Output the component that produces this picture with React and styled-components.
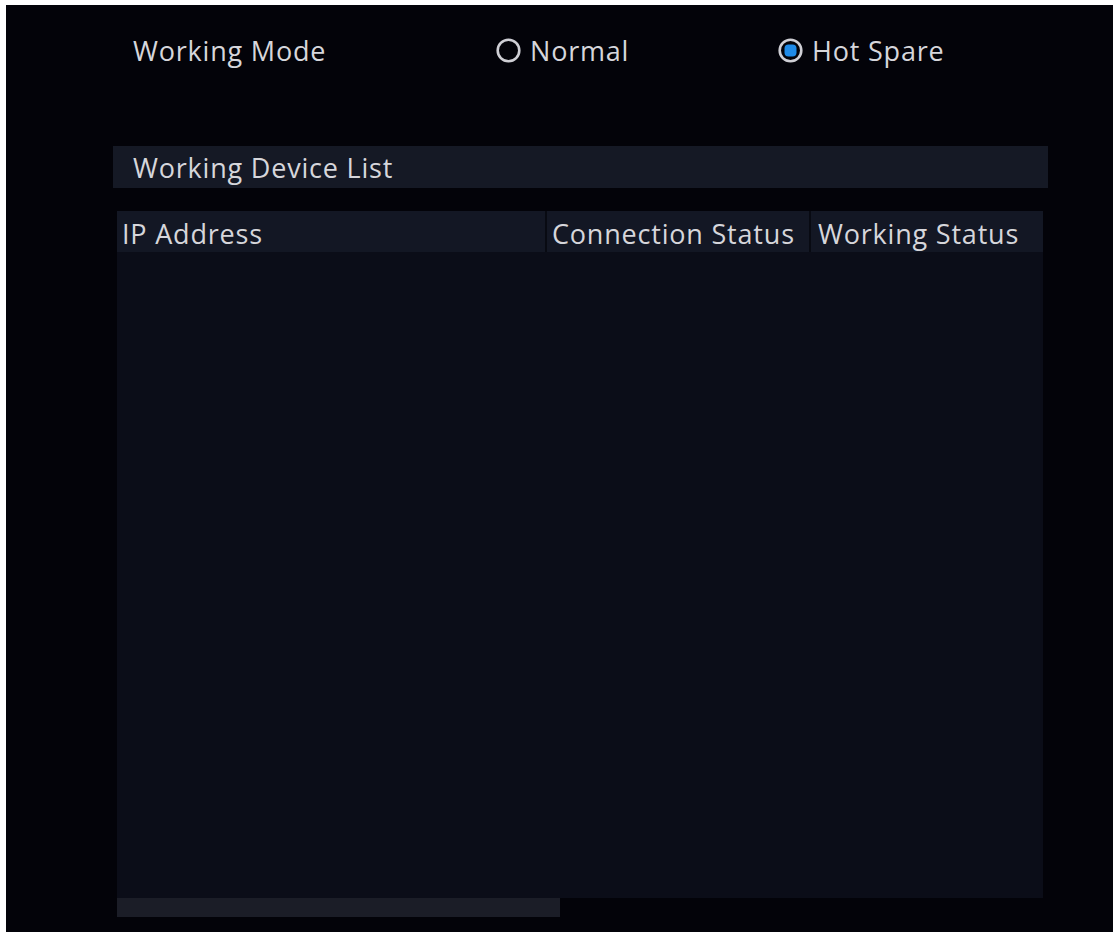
import React, { useState } from "react";
import styled, { createGlobalStyle } from "styled-components";

const GlobalStyle = createGlobalStyle`
    html, body {
        margin: 0;
        padding: 0;
        background: #ffffff;
    }
    body {
        font-family: "Open Sans", "DejaVu Sans", sans-serif;
    }
`;

const Screen = styled.div`
    margin: 5px 4px 0 6px;
    height: 927px;
    background-color: #030309;
    display: flex;
    flex-direction: column;
    color: #d6d6db;
    font-size: 27px;
    letter-spacing: 0.8px;
`;

const ModeRow = styled.div`
    display: flex;
    align-items: center;
    height: 38px;
    margin-top: 26px;
    padding-left: 127px;
`;

const ModeLabel = styled.div`
    width: 363px;
`;

const RadioOption = styled.label`
    display: flex;
    align-items: center;
    gap: 9px;
    width: ${(props) => props.width}px;
    cursor: pointer;
`;

const SectionBar = styled.div`
    display: flex;
    align-items: center;
    height: 42px;
    width: 935px;
    margin: 77px 0 0 107px;
    padding-left: 20px;
    box-sizing: border-box;
    background-color: #151925;
`;

const Table = styled.div`
    width: 926px;
    margin: 23px 0 0 111px;
    display: flex;
    flex-direction: column;
`;

const HeaderRow = styled.div`
    display: grid;
    grid-template-columns: 428px 262px 1fr;
    column-gap: 2px;
    height: 41px;
    background-color: #080a12;
`;

const HeaderCell = styled.div`
    display: flex;
    align-items: center;
    padding: 4px 0 0 ${(props) => props.pad}px;
    background-color: #131724;
    white-space: nowrap;
`;

const Body = styled.div`
    height: 646px;
    background-color: #0b0d18;
`;

const ScrollBar = styled.div`
    width: 443px;
    height: 19px;
    background-color: #1b1d27;
`;

const Radio = ({ checked }) => (
    <svg width="25" height="25" viewBox="0 0 25 25">
        <circle cx="12.5" cy="12.5" r="10.8" fill="none" stroke="#cfcfd5" strokeWidth="2.6" />
        {checked && <rect x="6.5" y="6.5" width="12" height="12" rx="4" fill="#1f8be8" />}
    </svg>
);

const App = () => {
    const [mode, setMode] = useState("hot");

    return (
        <>
            <GlobalStyle />
            <Screen>
                <ModeRow>
                    <ModeLabel>Working Mode</ModeLabel>
                    <RadioOption width={282} onClick={() => setMode("normal")}>
                        <Radio checked={mode === "normal"} />
                        Normal
                    </RadioOption>
                    <RadioOption width={200} onClick={() => setMode("hot")}>
                        <Radio checked={mode === "hot"} />
                        Hot Spare
                    </RadioOption>
                </ModeRow>
                <SectionBar>Working Device List</SectionBar>
                <Table>
                    <HeaderRow>
                        <HeaderCell pad={5}>IP Address</HeaderCell>
                        <HeaderCell pad={5}>Connection Status</HeaderCell>
                        <HeaderCell pad={7}>Working Status</HeaderCell>
                    </HeaderRow>
                    <Body />
                    <ScrollBar />
                </Table>
            </Screen>
        </>
    );
};

export default App;
